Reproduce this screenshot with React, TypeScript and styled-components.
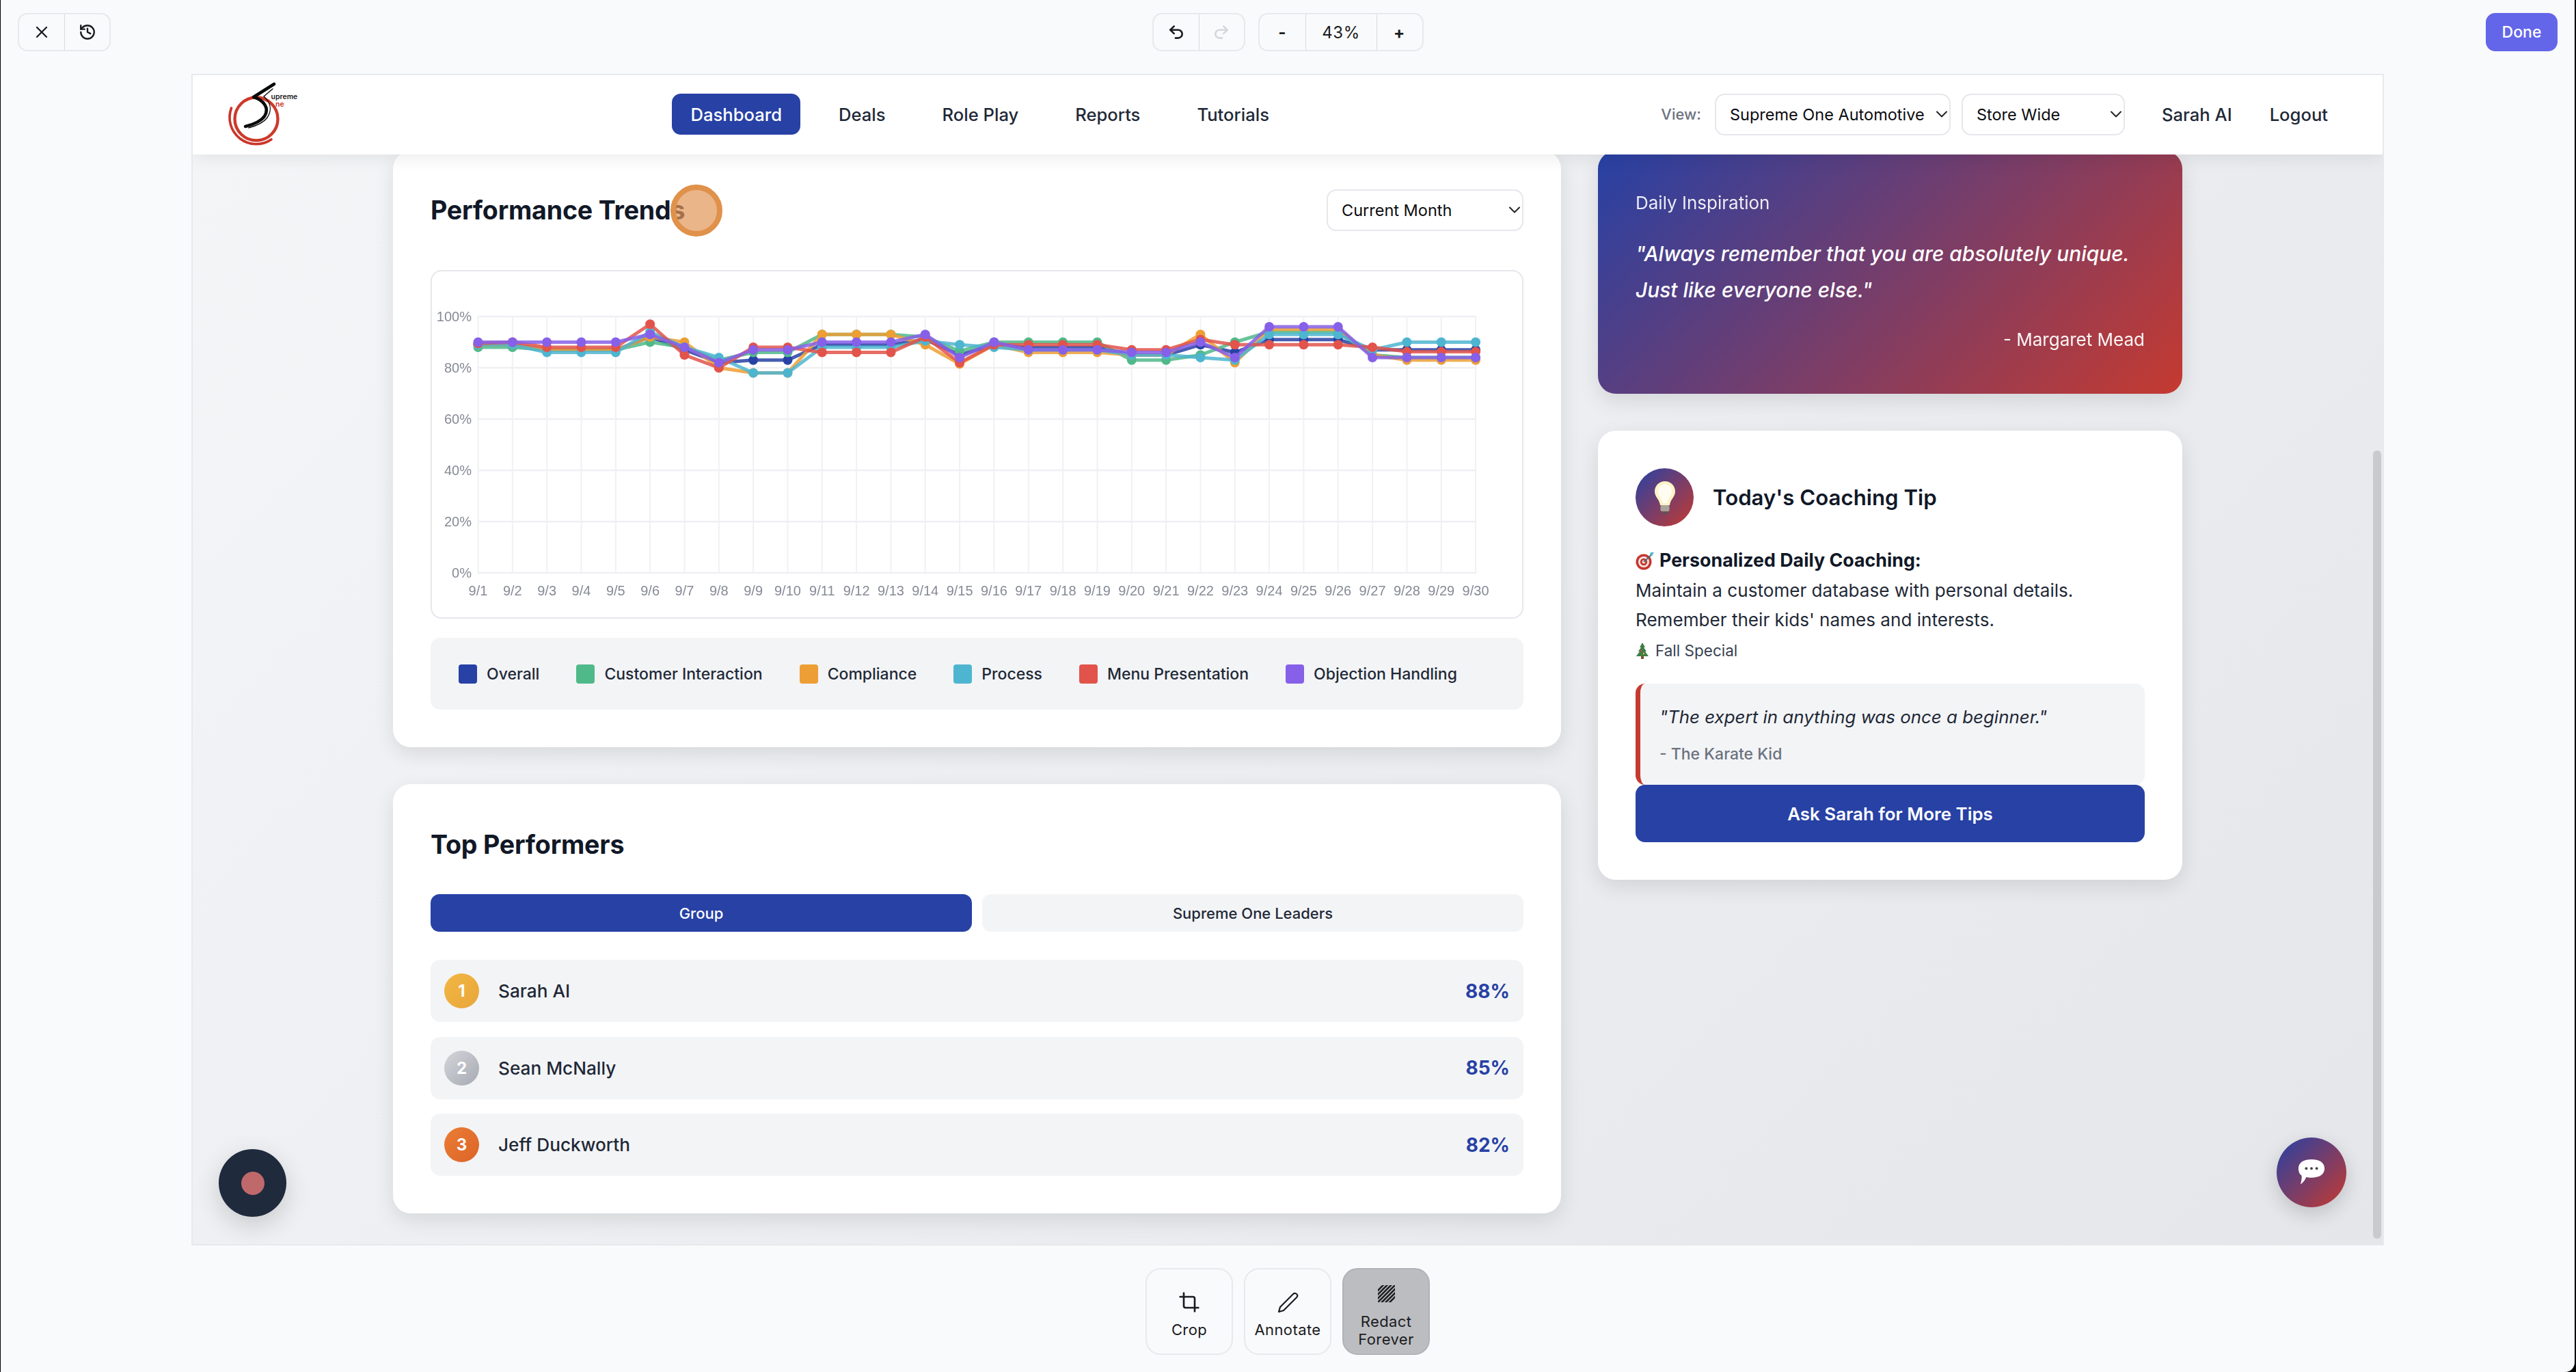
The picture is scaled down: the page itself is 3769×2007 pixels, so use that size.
import React from "react";
import styled, { createGlobalStyle } from "styled-components";
import { X, History, Undo2, Redo2, Crop, ChevronDown } from "lucide-react";

const Global = createGlobalStyle`
  html, body { margin: 0; padding: 0; background: #000; width: 3769px; height: 2007px; overflow: hidden; }
  * { box-sizing: border-box; }
  body { font-family: Inter, "Liberation Sans", sans-serif; color: #111827; }
`;

const Window = styled.div`
  width: 3766px; height: 2007px; margin-left: 1px; background: #f9fafc;
  border-bottom-right-radius: 14px; display: flex; flex-direction: column; overflow: hidden;
`;
const TopBar = styled.div`
  height: 108px; padding: 19px 25px 0 25px; display: grid; grid-template-columns: 1fr auto 1fr; align-items: start;
`;
const LeftTools = styled.div`display: flex;`;
const CenterTools = styled.div`display: flex; gap: 19px;`;
const RightTools = styled.div`display: flex; justify-content: flex-end;`;
const Group = styled.div`
  display: flex; height: 56px; border: 2px solid #e8e9ec; border-radius: 14px; overflow: hidden;
`;
const GroupCell = styled.div<{ $w: number; $off?: boolean }>`
  width: ${p => p.$w}px; display: flex; align-items: center; justify-content: center;
  color: ${p => (p.$off ? "#d5d7da" : "#1b1c20")}; font-size: 24px; letter-spacing: .5px;
  & + & { border-left: 1px solid #d9dadd; }
`;
const PlusMinus = styled.span`font-weight: 700; font-size: 24px;`;
const DoneButton = styled.div`
  width: 105px; height: 56px; background: #6366e8; border-radius: 14px; color: #fff;
  display: flex; align-items: center; justify-content: center; font-size: 23px; font-weight: 500;
`;

const Frame = styled.div`
  position: relative; width: 3208px; height: 1714px; margin: 0 auto; border: 2px solid #e8e9ec;
  display: flex; flex-direction: column; overflow: hidden;
`;
const Header = styled.header`
  position: relative; z-index: 2; height: 116px; flex: none; background: #fff; padding: 0 80px 2px 17px;
  display: flex; align-items: center; box-shadow: 0 6px 24px rgba(0,0,0,.07);
`;
const Logo = styled.svg`width: 180px; height: 116px; flex: none; margin-bottom: -2px;`;
const Nav = styled.nav`display: flex; gap: 28px; margin-left: 504px;`;
const NavItem = styled.div<{ $active?: boolean }>`
  height: 60px; padding: 0 27.5px; display: flex; align-items: center; border-radius: 13px; font-size: 25.6px; font-weight: 500;
  background: ${p => (p.$active ? "#2741a5" : "transparent")}; color: ${p => (p.$active ? "#fff" : "#1f2937")};
`;
const HeaderRight = styled.div`margin-left: auto; display: flex; align-items: center;`;
const ViewLabel = styled.span`font-size: 22px; color: #6b7280; margin-right: 20px; font-weight: 500;`;
const SelectBox = styled.div<{ $w: number }>`
  width: ${p => p.$w}px; height: 61px; background: #fff; border: 2px solid #e5e7eb; border-radius: 14px;
  display: flex; align-items: center; justify-content: space-between; padding: 0 0 0 20px;
  font-size: 23.5px; font-weight: 400; color: #0b0c10; flex: none;
  & + & { margin-left: 16px; }
`;
const Chevron = styled(ChevronDown).attrs({ size: 28, strokeWidth: 1.7, color: "#222" })`
  margin-right: -3px; flex: none;
`;
const UserLink = styled.span<{ $ml: number }>`font-size: 25.6px; font-weight: 500; color: #1f2937; margin-left: ${p => p.$ml}px;`;

const Main = styled.main`
  flex: 1; min-height: 0; overflow: hidden; background: linear-gradient(135deg, #f4f5f7 0%, #e4e6ea 100%);
  display: flex; justify-content: center;
`;
const Columns = styled.div`
  margin-top: -5px; width: 2618px; display: grid; grid-template-columns: 1709px 855px; column-gap: 54px; align-items: start;
`;
const Column = styled.div`display: flex; flex-direction: column; gap: 54px;`;
const Card = styled.section`
  background: #fff; border-radius: 26px; padding: 55px; box-shadow: 0 10px 30px rgba(0,0,0,.1);
`;
const CardHeader = styled.div`display: flex; justify-content: space-between; align-items: center; margin-bottom: 57px; height: 62px;`;
const Title = styled.h2`margin: 0; font-size: 37.6px; font-weight: 700; color: #111827; letter-spacing: -.2px;`;
const ChartBox = styled.div`height: 510px; border: 2px solid #e5e7eb; border-radius: 16px; overflow: hidden; display: flex;`;
const ChartSvg = styled.svg`width: 100%; height: 100%; display: block; filter: blur(.6px);`;
const Legend = styled.div`
  margin-top: 28px; height: 105px; background: #f3f4f6; border-radius: 14px; padding: 0 41px; display: flex; align-items: center; gap: 54px;
`;
const LegendItem = styled.div`display: flex; align-items: center; gap: 14px; font-size: 23px; font-weight: 500; color: #1f2937;`;
const Swatch = styled.span<{ $c: string }>`width: 27px; height: 28px; border-radius: 4px; background: ${p => p.$c};`;

const TitleRow = styled.div`height: 66px; display: flex; align-items: center; margin-bottom: 40px;`;
const Tabs = styled.div`display: grid; grid-template-columns: 1fr 1fr; gap: 15px; margin-bottom: 41px;`;
const Tab = styled.div<{ $active?: boolean }>`
  height: 55px; border-radius: 13px; display: flex; align-items: center; justify-content: center; font-size: 22px; font-weight: 500;
  background: ${p => (p.$active ? "#2741a5" : "#f3f4f6")}; color: ${p => (p.$active ? "#fff" : "#1f2937")};
`;
const Rows = styled.div`display: flex; flex-direction: column; gap: 21.5px;`;
const Row = styled.div`
  height: 91px; background: #f3f4f6; border-radius: 14px; padding: 0 20px; display: flex; align-items: center;
`;
const Rank = styled.div<{ $bg: string }>`
  width: 51px; height: 51px; border-radius: 50%; background: ${p => p.$bg}; color: #fff; display: flex; align-items: center; justify-content: center;
  font-size: 24px; font-weight: 700; margin-right: 28px;
`;
const Name = styled.div`font-size: 26.2px; font-weight: 500; color: #1f2937;`;
const Score = styled.div`margin-left: auto; font-size: 28px; font-weight: 700; color: #2741a5;`;

const InspireCard = styled.section`
  border-radius: 26px; height: 355px; padding: 55px; color: #fff; box-shadow: 0 10px 30px rgba(0,0,0,.1);
  background: linear-gradient(135deg, #2741a5 0%, #c53a30 100%); display: flex; flex-direction: column;
`;
const InspireLabel = styled.div`font-size: 26px; line-height: 42px; opacity: .9; margin-bottom: 27px;`;
const InspireQuote = styled.div`font-size: 29.9px; line-height: 53px; font-style: italic; font-weight: 500; margin-bottom: 26px;`;
const InspireAuthor = styled.div`font-size: 26px; line-height: 40px; text-align: right; opacity: .95;`;

const TipHead = styled.div`display: flex; align-items: center; gap: 28px; height: 85px; margin-bottom: 28px;`;
const TipIcon = styled.div`
  width: 85px; height: 85px; border-radius: 50%; flex: none; display: flex; align-items: center; justify-content: center;
  background: linear-gradient(135deg, #2741a5 0%, #c53a30 100%);
`;
const TipTitle = styled.h3`margin: 0; font-size: 31.2px; font-weight: 600; color: #111827;`;
const TipLine = styled.div`font-size: 26.1px; line-height: 43.5px; color: #1f2937;`;
const TipStrong = styled.div`font-size: 26.8px; line-height: 43.5px; font-weight: 700; color: #111827; display: flex; align-items: center; gap: 7px;`;
const Season = styled.div`font-size: 22.5px; line-height: 42px; color: #374151; display: flex; align-items: center; gap: 9px; margin: 2px 0 27px;`;
const QuoteBox = styled.div`
  height: 148.5px; background: #f3f4f6; border-left: 7px solid #c53a30; border-radius: 14px; padding: 27px 28px;
`;
const QuoteText = styled.div`font-size: 25.9px; line-height: 44px; font-style: italic; color: #1f2937; margin-bottom: 10px;`;
const QuoteAuthor = styled.div`font-size: 23px; line-height: 44px; color: #6b7280; font-weight: 500;`;
const AskButton = styled.div`
  height: 84px; background: #2741a5; border-radius: 14px; color: #fff; display: flex; align-items: center; justify-content: center;
  font-size: 25.9px; font-weight: 600;
`;

const Highlight = styled.div`
  position: absolute; left: 699px; top: 160px; width: 76px; height: 76px; border-radius: 50%; z-index: 3;
  border: 8px solid #e0914a; background: rgba(226, 150, 88, .7);
`;
const RecordButton = styled.div`
  position: absolute; left: 38px; bottom: 40px; width: 99px; height: 99px; border-radius: 50%; background: #1f2a3d; z-index: 3;
  display: flex; align-items: center; justify-content: center; box-shadow: 0 12px 36px rgba(0,0,0,.16);
`;
const RecordDot = styled.div`width: 34px; height: 34px; border-radius: 50%; background: #c0696b;`;
const ChatButton = styled.div`
  position: absolute; right: 53px; bottom: 54px; width: 102px; height: 102px; border-radius: 50%; z-index: 3;
  background: linear-gradient(135deg, #2741a5 0%, #c53a30 100%); box-shadow: 0 10px 28px rgba(0,0,0,.16);
  display: flex; align-items: center; justify-content: center;
`;
const ScrollThumb = styled.div`
  position: absolute; right: 2px; top: 549px; bottom: 8px; width: 12px; border-radius: 6px; background: #c8cad0; z-index: 1;
`;

const BottomBar = styled.div`display: flex; justify-content: center; gap: 16px; padding-top: 33px;`;
const Tool = styled.div<{ $active?: boolean }>`
  width: 128px; height: 127px; border-radius: 22px; border: 2px solid ${p => (p.$active ? "#b1b2b6" : "#e8e9ec")};
  background: ${p => (p.$active ? "#bcbdc1" : "transparent")}; color: #1b1c20;
  display: flex; flex-direction: column; align-items: center; justify-content: flex-start;
  padding-top: ${p => (p.$active ? "23px" : "32px")}; gap: ${p => (p.$active ? "15px" : "11px")};
  font-size: 22px; line-height: 26px; text-align: center; letter-spacing: .4px;
`;

const days = Array.from({ length: 30 }, (_, i) => `9/${i + 1}`);
const series: { name: string; color: string; data: number[] }[] = [
  { name: "Overall", color: "#2741a5", data: [89,89,87,87,87,92,87,82,83,83,89,89,89,91,85,89,88,88,88,85,85,89,86,91,91,91,87,87,87,87] },
  { name: "Customer Interaction", color: "#50b98a", data: [88,88,87,87,87,90,88,83,86,86,93,93,93,92,86.5,90,90,90,90,83,83,85,90,94,94,94,85,84,84,84] },
  { name: "Compliance", color: "#ed9f35", data: [89,89,87,87,87,92,90,80,78,78,93,93,93,89,81.5,89,86,86,86,85,85,93,82,95,95,95,85,83,83,83] },
  { name: "Process", color: "#4eb5d0", data: [89,89,86,86,86,94,88,84,78,78,88,88,88,90.5,89,88,87,87,87,85,85,84,83,93,93,93,87,90,90,90] },
  { name: "Menu Presentation", color: "#e2534b", data: [89.5,90,88,88,88,97,85,80,88,88,86,86,86,92,82,89,89,89,89,87,87,91,89,89,89,89,88,86.3,86.3,86.3] },
  { name: "Objection Handling", color: "#8660e8", data: [90,90,90,90,90,93,88,82,87,87,90,90,90,93,84,90,87,87,87,86,86,90,84,96,96,96,84,84,84,84] },
];
const xAt = (i: number) => 699.5 + i * 50.33;
const yAt = (v: number) => 838 - v * 3.75;

function TrendChart() {
  return (
    <ChartSvg viewBox="633 397 1593 506">
      {[0, 20, 40, 60, 80, 100].map(v => (
        <g key={v}>
          <line x1={699} x2={2160} y1={yAt(v)} y2={yAt(v)} stroke="#eff0f3" strokeWidth={2.4} />
          <text x={690} y={yAt(v) + 7} textAnchor="end" fontFamily="Liberation Sans" fontSize={20} fill="#868a96">{v}%</text>
        </g>
      ))}
      {days.map((d, i) => (
        <g key={d}>
          <line x1={xAt(i)} x2={xAt(i)} y1={463} y2={838} stroke="#f0f1f5" strokeWidth={2} />
          <text x={xAt(i)} y={871} textAnchor="middle" fontFamily="Liberation Sans" fontSize={20} fill="#868a96">{d}</text>
        </g>
      ))}
      {series.map(s => (
        <g key={s.name}>
          <polyline fill="none" stroke={s.color} strokeOpacity={0.85} strokeWidth={5} strokeLinejoin="round"
            points={s.data.map((v, i) => `${xAt(i)},${yAt(v)}`).join(" ")} />
          {s.data.map((v, i) => <circle key={i} cx={xAt(i)} cy={yAt(v)} r={7} fill={s.color} />)}
        </g>
      ))}
    </ChartSvg>
  );
}

export default function App() {
  return (
    <Window>
      <Global />
      <TopBar>
        <LeftTools>
          <Group>
            <GroupCell $w={66}><X size={28} strokeWidth={2} /></GroupCell>
            <GroupCell $w={66}><History size={26} strokeWidth={2.2} /></GroupCell>
          </Group>
        </LeftTools>
        <CenterTools>
          <Group>
            <GroupCell $w={66}><Undo2 size={26} strokeWidth={2.4} /></GroupCell>
            <GroupCell $w={66} $off><Redo2 size={26} strokeWidth={2.4} /></GroupCell>
          </Group>
          <Group>
            <GroupCell $w={67}><PlusMinus>-</PlusMinus></GroupCell>
            <GroupCell $w={104}>43%</GroupCell>
            <GroupCell $w={67}><PlusMinus>+</PlusMinus></GroupCell>
          </Group>
        </CenterTools>
        <RightTools><DoneButton>Done</DoneButton></RightTools>
      </TopBar>

      <Frame>
        <Header>
          <Logo viewBox="0 10 180 116">
            <circle cx="76" cy="74" r="31.5" fill="none" stroke="#cc3a2c" strokeWidth="4.4" />
            <path d="M39.5 58 A39 39 0 0 0 98 104" fill="none" stroke="#c9352b" strokeWidth="3.6" strokeLinecap="round" />
            <path d="M102 23 L72 42 C86 46 96 58 88 70 C83 77 72 82 60 85" fill="none" stroke="#0a0a0a" strokeWidth="4.6" strokeLinecap="round" strokeLinejoin="round" />
            <path d="M100 30 L87 41 C96 49 100 60 92 72 C87 79 76 84 65 87" fill="none" stroke="#0a0a0a" strokeWidth="1.4" strokeLinecap="round" />
            <text x="97.5" y="44.5" fontFamily="Inter, sans-serif" fontSize="10.5" fontWeight="600" fill="#222">upreme</text>
            <text x="104" y="56" fontFamily="Inter, sans-serif" fontSize="10.5" fontWeight="600" fill="#c9352b">ne</text>
          </Logo>
          <Nav>
            <NavItem $active>Dashboard</NavItem>
            <NavItem>Deals</NavItem>
            <NavItem>Role Play</NavItem>
            <NavItem>Reports</NavItem>
            <NavItem>Tutorials</NavItem>
          </Nav>
          <HeaderRight>
            <ViewLabel>View:</ViewLabel>
            <SelectBox $w={345}>Supreme One Automotive<Chevron /></SelectBox>
            <SelectBox $w={239}>Store Wide<Chevron /></SelectBox>
            <UserLink $ml={54}>Sarah AI</UserLink>
            <UserLink $ml={55}>Logout</UserLink>
          </HeaderRight>
        </Header>

        <Main>
          <Columns>
            <Column>
              <Card>
                <CardHeader>
                  <Title>Performance Trends</Title>
                  <SelectBox $w={288}>Current Month<Chevron /></SelectBox>
                </CardHeader>
                <ChartBox><TrendChart /></ChartBox>
                <Legend>
                  {series.map(s => (
                    <LegendItem key={s.name}><Swatch $c={s.color} />{s.name}</LegendItem>
                  ))}
                </Legend>
              </Card>
              <Card>
                <TitleRow><Title>Top Performers</Title></TitleRow>
                <Tabs>
                  <Tab $active>Group</Tab>
                  <Tab>Supreme One Leaders</Tab>
                </Tabs>
                <Rows>
                  <Row><Rank $bg="linear-gradient(135deg,#f2b743,#e9a63a)">1</Rank><Name>Sarah AI</Name><Score>88%</Score></Row>
                  <Row><Rank $bg="linear-gradient(135deg,#d3d5da,#a6aab2)">2</Rank><Name>Sean McNally</Name><Score>85%</Score></Row>
                  <Row><Rank $bg="linear-gradient(135deg,#ea7d34,#dc6428)">3</Rank><Name>Jeff Duckworth</Name><Score>82%</Score></Row>
                </Rows>
              </Card>
            </Column>
            <Column>
              <InspireCard>
                <InspireLabel>Daily Inspiration</InspireLabel>
                <InspireQuote>"Always remember that you are absolutely unique.<br />Just like everyone else."</InspireQuote>
                <InspireAuthor>- Margaret Mead</InspireAuthor>
              </InspireCard>
              <Card>
                <TipHead>
                  <TipIcon>
                    <svg width="34" height="50" viewBox="0 0 34 50">
                      <path d="M17 1 C8 1 2 8 2 16 C2 24 9 27 10 36 L24 36 C25 27 32 24 32 16 C32 8 26 1 17 1 Z" fill="#fdf3c8" />
                      <path d="M17 5 C11 5 7 10 7 16 C7 22 13 26 14 33 L20 33 C21 26 27 22 27 16 C27 10 23 5 17 5 Z" fill="#fffdf2" />
                      <rect x="10.5" y="36" width="13" height="9" rx="2" fill="#a9a49a" />
                      <rect x="13" y="45" width="8" height="4" rx="2" fill="#5b5750" />
                    </svg>
                  </TipIcon>
                  <TipTitle>Today's Coaching Tip</TipTitle>
                </TipHead>
                <TipStrong>
                  <svg width="28" height="28" viewBox="0 0 28 28">
                    <circle cx="12" cy="16" r="11.5" fill="#c8352e" />
                    <circle cx="12" cy="16" r="8" fill="#f3e6e0" />
                    <circle cx="12" cy="16" r="5.2" fill="#c8352e" />
                    <circle cx="12" cy="16" r="2.4" fill="#f3e6e0" />
                    <path d="M12 16 L24 5" stroke="#4a6a76" strokeWidth="1.8" />
                    <path d="M22 2 L27 2 L24 7 L21 6 Z" fill="#4db6c9" />
                  </svg>
                  Personalized Daily Coaching:
                </TipStrong>
                <TipLine>Maintain a customer database with personal details.</TipLine>
                <TipLine>Remember their kids' names and interests.</TipLine>
                <Season>
                  <svg width="20" height="24" viewBox="0 0 20 24">
                    <path d="M10 0 L14 7 L12 7 L16 13 L14 13 L19 20 L1 20 L6 13 L4 13 L8 7 L6 7 Z" fill="#3f7d45" />
                    <circle cx="8" cy="12" r="1.2" fill="#d9483b" />
                    <circle cx="12" cy="16" r="1.2" fill="#e9b93e" />
                    <rect x="8" y="20" width="4" height="4" fill="#7a5233" />
                  </svg>
                  Fall Special
                </Season>
                <QuoteBox>
                  <QuoteText>"The expert in anything was once a beginner."</QuoteText>
                  <QuoteAuthor>- The Karate Kid</QuoteAuthor>
                </QuoteBox>
                <AskButton>Ask Sarah for More Tips</AskButton>
              </Card>
            </Column>
          </Columns>
        </Main>

        <Highlight />
        <ScrollThumb />
        <RecordButton><RecordDot /></RecordButton>
        <ChatButton>
          <svg width="42" height="42" viewBox="0 0 44 44">
            <path d="M22 2 C33 2 42 6 42 16 C42 26 33 30 22 30 C19 30 16 30 14 29 C12 34 9 38 5 40 C7 35 7 31 7 27 C3 24 2 20 2 16 C2 6 11 2 22 2 Z" fill="#fff" />
            <circle cx="14" cy="16" r="2" fill="#444" />
            <circle cx="22" cy="16" r="2" fill="#444" />
            <circle cx="30" cy="16" r="2" fill="#444" />
          </svg>
        </ChatButton>
      </Frame>

      <BottomBar>
        <Tool><Crop size={32} strokeWidth={2} />Crop</Tool>
        <Tool>
          <svg width="32" height="32" viewBox="0 0 32 32" fill="none" stroke="#1b1c20" strokeWidth="2.2" strokeLinejoin="round">
            <path d="M3 30 L5 23 L24 4 C26 2 29 3 30 5 C31 7 30 8 29 9 L10 28 Z" />
          </svg>
          Annotate
        </Tool>
        <Tool $active>
          <svg width="25" height="25" viewBox="0 0 26 26" stroke="#1b1c20" strokeWidth="2.6">
            <defs><clipPath id="hatch"><rect width="26" height="26" /></clipPath></defs>
            <g clipPath="url(#hatch)">
              {[-18, -12, -6, 0, 6, 12, 18].map(o => <line key={o} x1={o - 4} y1={30} x2={o + 30} y2={-4} />)}
            </g>
          </svg>
          <div>Redact<br />Forever</div>
        </Tool>
      </BottomBar>
    </Window>
  );
}
